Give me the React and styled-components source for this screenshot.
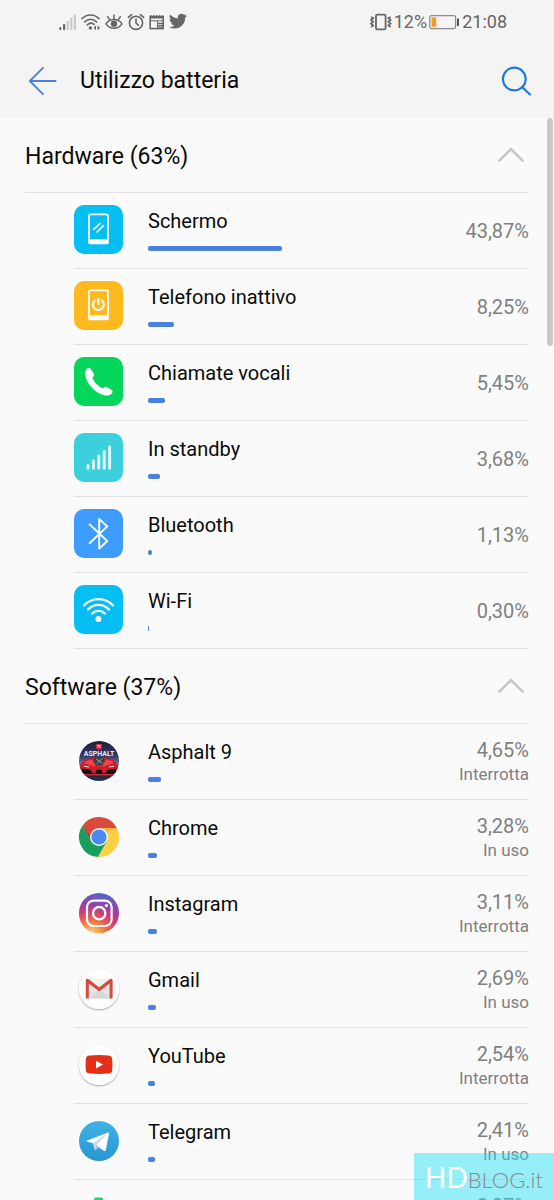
import React, { useState } from "react";
import styled, { createGlobalStyle } from "styled-components";

const GlobalStyle = createGlobalStyle`
  *, *::before, *::after { box-sizing: border-box; }
  body {
    margin: 0;
    background: #fafafa;
    color: #0a0a0a;
    font-family: Roboto, "Noto Sans", sans-serif;
  }
  button { font: inherit; color: inherit; background: none; border: 0; padding: 0; cursor: pointer; }
  ul { list-style: none; margin: 0; padding: 0; }
  svg { display: block; flex: none; }
`;

const Screen = styled.div`
  position: relative;
  display: flex;
  flex-direction: column;
  height: 100vh;
  overflow: hidden;
`;

const TopArea = styled.header`
  flex: none;
  background: #f4f4f4;
`;

const StatusBar = styled.div`
  display: flex;
  align-items: center;
  justify-content: space-between;
  height: 44px;
  padding: 0 47px 0 59px;
  color: #666;
  font-size: 18px;
  line-height: 24px;
`;

const StatusGroup = styled.div`
  display: flex;
  align-items: center;
  gap: ${(p) => p.$gap}px;
`;

const TitleBar = styled.div`
  display: flex;
  align-items: center;
  height: 74px;
  padding: 0 22px 0 28px;
`;

const IconButton = styled.button`
  display: flex;
  flex: none;
`;

const Title = styled.h1`
  flex: 1;
  margin: 0;
  padding-left: 23px;
  font-size: 23px;
  line-height: 32px;
  font-weight: 400;
`;

const Content = styled.main`
  position: relative;
  flex: 1;
  min-height: 0;
  overflow: hidden;
`;

const ScrollThumb = styled.div`
  position: absolute;
  top: 0;
  right: 1px;
  width: 6px;
  height: 228px;
  border-radius: 3px;
  background: #c9c9c9;
`;

const SectionHeading = styled.h2`
  margin: 0 25px;
  font-size: 23px;
  font-weight: 400;
  border-bottom: 1px solid #e2e2e2;
`;

const SectionToggle = styled.button`
  display: flex;
  align-items: center;
  justify-content: space-between;
  width: 100%;
  height: 74px;
  padding-right: 4px;
  text-align: left;
`;

const SectionLabel = styled.span`
  padding-top: 2px;
`;

const Chevron = styled.svg`
  transform: ${(p) => (p.$open ? "none" : "rotate(180deg)")};
`;

const Row = styled.li`
  display: flex;
  height: 76px;
  margin: 0 25px 0 74px;
  border-bottom: 1px solid #e2e2e2;
`;

const IconCell = styled.div`
  display: flex;
  flex: none;
  align-items: center;
  justify-content: center;
  width: 49px;
  padding-bottom: 2px;
`;

const Tile = styled.div`
  width: 49px;
  height: 49px;
  border-radius: 10px;
  background: ${(p) => p.$color};
`;

const Disc = styled.div`
  width: 40px;
  height: 40px;
  border-radius: 50%;
  box-shadow: ${(p) => (p.$raised ? "0 1px 2px rgba(0, 0, 0, 0.35)" : "none")};
`;

const Details = styled.div`
  flex: 1;
  min-width: 0;
  padding: 16px 0 0 25px;
`;

const Name = styled.div`
  font-size: 20px;
  line-height: 24px;
  white-space: nowrap;
`;

const UsageBar = styled.div`
  height: 5px;
  margin-top: 13px;
  border-radius: 2px;
  background: #4a80de;
`;

const Figures = styled.div`
  display: flex;
  flex: none;
  flex-direction: column;
  justify-content: center;
  padding-top: 1px;
  color: #808080;
  text-align: right;
`;

const Percent = styled.div`
  font-size: 20px;
  line-height: 24px;
`;

const State = styled.div`
  font-size: 17px;
  line-height: 24px;
`;

const Watermark = styled.div`
  position: absolute;
  right: 0;
  bottom: 0;
  display: flex;
  align-items: baseline;
  height: 47px;
  width: 140px;
  padding: 6px 0 0 11px;
  background: rgba(28, 223, 246, 0.45);
  font-family: Lato, sans-serif;
  font-weight: 300;
  line-height: 36px;
`;

const BrandLead = styled.span`
  color: #fff;
  font-size: 28px;
  font-weight: 400;
`;

const BrandTail = styled.span`
  color: #8c8590;
  font-size: 22px;
`;

/* Status bar icons */

const Signal = () => (
  <svg width="18" height="18" viewBox="0 0 18 18">
    <g fill="#666">
      <rect x="0.3" y="14" width="2" height="3" rx="0.8" />
      <rect x="4" y="11" width="2.2" height="6" rx="0.8" />
    </g>
    <g fill="#c9c9c9">
      <rect x="7.6" y="8" width="2.2" height="9" rx="0.8" />
      <rect x="11.2" y="4.5" width="2.2" height="12.5" rx="0.8" />
      <rect x="14.8" y="1.5" width="2.2" height="15.5" rx="0.8" />
    </g>
  </svg>
);

const WifiStatus = () => (
  <svg width="20" height="18" viewBox="0 0 20 18" fill="none" stroke="#666" strokeWidth="1.6" strokeLinecap="round">
    <path d="M1 5.6C5.8.8 13.2.8 18 5.6M3.6 9C7 5.3 12.2 5.3 15.6 9M6.2 12C8.4 9.8 11 9.8 13 11.4" />
    <circle cx="9.4" cy="15" r="1.7" fill="#666" stroke="none" />
    <path d="M15 12.4l-2.4 2.4 2.4 2.4zM16.6 12.4l2.4 2.4-2.4 2.4z" fill="#666" stroke="none" />
  </svg>
);

const Eye = () => (
  <svg width="18" height="18" viewBox="0 0 18 18" fill="none" stroke="#666" strokeWidth="1.5" strokeLinecap="round">
    <path d="M1 10.8C4.6 5 13.4 5 17 10.8 13.4 16.6 4.6 16.6 1 10.8z" />
    <circle cx="9" cy="10.7" r="3.2" fill="#666" stroke="none" />
    <path d="M9 5.4V2M4.6 6.4 2.6 3.8M13.4 6.4l2-2.6" />
  </svg>
);

const Alarm = () => (
  <svg width="18" height="18" viewBox="0 0 18 18" fill="none" stroke="#666" strokeWidth="1.6" strokeLinecap="round">
    <circle cx="9" cy="9.8" r="6.6" />
    <path d="M9 6v4l2.4 2.2M1.4 4.4 4.6 1.6M16.6 4.4 13.4 1.6" />
  </svg>
);

const News = () => (
  <svg width="16" height="18" viewBox="0 0 16 18" fill="none" stroke="#666">
    <rect x="1.2" y="3.6" width="13" height="12" strokeWidth="1.6" />
    <path d="M1 4.6h13.4M2 2.2v2M4.8 2.2v2M7.6 2.2v2M10.4 2.2v2M13.4 2.2v2" strokeWidth="1.6" />
    <path d="M2 7.8h12M8.4 8v7" strokeWidth="1" />
    <path d="M9 10.4h5M9 12.4h5M9 14.2h5" strokeWidth="1.2" />
  </svg>
);

const Bird = () => (
  <svg width="18" height="18" viewBox="0 1 24 24" fill="#666">
    <path d="M23.95 4.57a10 10 0 0 1-2.82.77 4.96 4.96 0 0 0 2.16-2.72c-.95.55-2 .95-3.13 1.18a4.92 4.92 0 0 0-8.38 4.48C7.69 8.1 4.07 6.13 1.64 3.16a4.92 4.92 0 0 0 1.52 6.57 4.9 4.9 0 0 1-2.23-.61v.06a4.92 4.92 0 0 0 3.95 4.83 5 5 0 0 1-2.21.08 4.94 4.94 0 0 0 4.6 3.42A9.87 9.87 0 0 1 0 19.54a14 14 0 0 0 7.55 2.21c9.05 0 14-7.5 14-13.98 0-.21 0-.42-.02-.63a9.94 9.94 0 0 0 2.42-2.57z" />
  </svg>
);

const Vibrate = () => (
  <svg width="22" height="18" viewBox="0 0 22 18" fill="none" stroke="#666">
    <rect x="6" y="1.6" width="9.6" height="14.8" rx="1.4" strokeWidth="1.8" />
    <path d="M1 4l2.2 1.2L1 7l2.2 1.8L1 10.6l2.2 1.8L1 14M20.6 4l-2.2 1.2L20.6 7l-2.2 1.8 2.2 1.8-2.2 1.8 2.2 1.6" strokeWidth="1.7" />
  </svg>
);

const Battery = () => (
  <svg width="31" height="16" viewBox="0 0 31 16">
    <rect x="0.8" y="1.6" width="25.8" height="13" rx="1.8" fill="none" stroke="#8d8d8d" strokeWidth="1.3" />
    <rect x="2.6" y="3.4" width="4.6" height="9.4" fill="#f79a1f" />
    <rect x="28" y="4.4" width="2" height="7.6" rx="0.6" fill="#555" />
  </svg>
);

/* Title bar icons */

const BackArrow = () => (
  <svg width="29" height="30" viewBox="0 0 29 30" fill="none" stroke="#4a83d9" strokeWidth="1.9" strokeLinecap="round" strokeLinejoin="round">
    <path d="M15 1.8 1.8 15 15 28.2M2 15h25.6" />
  </svg>
);

const SearchIcon = () => (
  <svg width="31" height="30" viewBox="0 0 31 30" fill="none" stroke="#1f78d6" strokeWidth="2.1" strokeLinecap="round">
    <circle cx="13.3" cy="13" r="11.4" />
    <path d="M21.4 21.2 29 28.6" />
  </svg>
);

/* Hardware tile icons, drawn on a 49 unit grid */

const PhoneFrame = ({ children }) => (
  <svg viewBox="0 0 49 49" fill="none" stroke="#fff" strokeLinecap="round">
    <rect x="15" y="9.4" width="19" height="29" rx="2" strokeWidth="1.8" />
    <path d="M15.4 36.3h18.2" strokeWidth="4" strokeLinecap="butt" />
    {children}
  </svg>
);

const ScreenGlyph = () => (
  <PhoneFrame>
    <path d="M19.6 24.4 26 18.6M23 27 29.4 20.6" strokeWidth="1.7" />
  </PhoneFrame>
);

const IdleGlyph = () => (
  <PhoneFrame>
    <path d="M20.7 19.4a5.5 5.5 0 1 0 7.4 0M24.4 18v5" strokeWidth="2" />
  </PhoneFrame>
);

const CallGlyph = () => (
  <svg viewBox="0 0 49 49" fill="#fff">
    <path d="M12.5 12.2C13.7 10.4 15.6 10.4 16.8 12L19.8 16.4C20.6 17.8 20 18.8 18.4 20.6C20 25.4 24 29.6 28.8 31.4C30.4 29.8 31.6 29.4 33 30.2L37.8 33.1C39 34 38.8 35.2 38 36.2C35.5 39.4 31.5 38.9 27 37.2C19 33.7 13 26.4 11.2 18.2C10.8 16 11.3 14 12.5 12.2Z" />
  </svg>
);

const StandbyGlyph = () => (
  <svg viewBox="0 0 49 49" stroke="#e6fbfb" strokeWidth="2.9" strokeLinecap="round">
    <path d="M14 32.8v2.4M19.4 28v7.2M24.8 23v12.2M30.2 18.4v16.8M35.6 14v21.2" />
  </svg>
);

const BluetoothGlyph = () => (
  <svg viewBox="0 0 49 49" fill="none" stroke="#fff" strokeWidth="1.9" strokeLinecap="round" strokeLinejoin="round">
    <path d="M15.6 15.4 33.2 32 25.2 39.6V10L33.2 17.4 15.6 34.2" />
  </svg>
);

const WifiGlyph = () => (
  <svg viewBox="0 0 49 49" fill="none" stroke="#fff" strokeWidth="2.2" strokeLinecap="round">
    <path d="M10 20.4C18 12 31 12 39 20.4M14 24.6C20 18.4 29 18.4 35 24.6M18.2 28.6C21.8 24.8 27.2 24.8 30.8 28.6" />
    <circle cx="24.4" cy="33.9" r="3" fill="#fff" stroke="none" />
  </svg>
);

/* Application icons, drawn on a 40 unit grid */

const RacingIcon = () => (
  <svg viewBox="0 0 40 40">
    <defs>
      <clipPath id="race-clip"><circle cx="20" cy="20" r="20" /></clipPath>
      <linearGradient id="race-sky" x1="0" y1="0" x2="0" y2="1">
        <stop offset="0" stopColor="#1b1d33" />
        <stop offset="0.4" stopColor="#3c3e6c" />
        <stop offset="0.55" stopColor="#6b6fa8" />
        <stop offset="0.8" stopColor="#221a2c" />
        <stop offset="1" stopColor="#2b3558" />
      </linearGradient>
    </defs>
    <g clipPath="url(#race-clip)">
      <rect width="40" height="40" fill="url(#race-sky)" />
      <path d="M17 3h6v4.4L20 9.6l-3-2.2z" fill="#c8203f" />
      <path d="M18.4 4.4h3.2M18.4 6h3.2" stroke="#fff" strokeWidth="0.8" />
      <text x="20" y="15.4" fill="#e8ebf5" fontFamily="Roboto, sans-serif" fontSize="7" fontWeight="700" textAnchor="middle">ASPHALT</text>
      <path d="M1 24 6 18.4l7-1.4h14l7 1.4 5 5.6 1 8H0z" fill="#c9202c" />
      <path d="M14 18.6 17 16.6h6l3 2-3 5.4h-6z" fill="#39404a" />
      <path d="M17 18l6 4M23 17.6l-5 5" stroke="#9aa8a5" strokeWidth="1" />
      <path d="M6 20.4 13 18.6l4 7.4-11-3.6z" fill="#f0434c" />
      <path d="M34 20.4 27 18.6l-4 7.4 11-3.6z" fill="#f0434c" />
      <path d="M3 27.4l8 1.4 3 3.6H3zM37 27.4l-8 1.4-3 3.6h11zM17.6 28.6h4.8l1.2 4h-7.2z" fill="#1c1015" />
      <path d="M5 25.2l5 .8M35 25.2l-5 .8" stroke="#ffd9d6" strokeWidth="1" />
      <path d="M3 33h34l-4 1.6H7z" fill="#c52d38" />
    </g>
  </svg>
);

const ChromeIcon = () => (
  <svg viewBox="0 0 40 40">
    <path d="M3.27 9.03A20 20 0 0 1 37.86 11H20L12.21 24.5z" fill="#d94a3c" />
    <path d="M37.86 11A20 20 0 0 1 18.86 39.97L27.79 24.5 20 11z" fill="#fdcf47" />
    <path d="M18.86 39.97A20 20 0 0 1 3.27 9.03L12.21 24.5h15.58z" fill="#17a05d" />
    <path d="M20 11h17.86l.6 1.6L27 15z" fill="#e0a830" opacity="0.5" />
    <path d="M3.27 9.03 12.21 24.5 11 18z" fill="#7d3b26" opacity="0.5" />
    <circle cx="20" cy="20" r="9" fill="#f5f5f5" />
    <circle cx="20" cy="20" r="7.6" fill="#4a89f3" />
  </svg>
);

const InstagramIcon = () => (
  <svg viewBox="0 0 40 40">
    <defs>
      <linearGradient id="insta-base" x1="0.6" y1="0" x2="0.4" y2="1">
        <stop offset="0" stopColor="#4f68c2" />
        <stop offset="0.35" stopColor="#9740ae" />
        <stop offset="0.65" stopColor="#d63278" />
        <stop offset="1" stopColor="#ee5348" />
      </linearGradient>
      <radialGradient id="insta-glow" cx="0.32" cy="1.02" r="0.75">
        <stop offset="0" stopColor="#ffd776" />
        <stop offset="0.35" stopColor="#f9943f" stopOpacity="0.9" />
        <stop offset="1" stopColor="#e2384f" stopOpacity="0" />
      </radialGradient>
    </defs>
    <circle cx="20" cy="20" r="20" fill="url(#insta-base)" />
    <circle cx="20" cy="20" r="20" fill="url(#insta-glow)" />
    <rect x="8" y="7.6" width="24.6" height="25.4" rx="6.6" fill="none" stroke="#fff" strokeWidth="2.2" />
    <circle cx="20.2" cy="20.2" r="6.2" fill="none" stroke="#fff" strokeWidth="2.3" />
    <circle cx="27.4" cy="12.6" r="1.6" fill="#fff" />
  </svg>
);

const GmailIcon = () => (
  <svg viewBox="0 0 40 40">
    <circle cx="20" cy="20" r="20" fill="#fefefe" />
    <rect x="7" y="10" width="26.4" height="19.6" rx="1.4" fill="#e4e4e4" />
    <path d="M10 29.6 20 20.6l13 9z" fill="#d8d8d8" />
    <path d="M9.4 10h21.6L20.2 18.6z" fill="#f1f1f1" />
    <path d="M6.8 11.4C6.8 9.8 8.8 9.4 10 10.4L20.2 18.4 30.4 10.4C31.6 9.4 33.6 9.8 33.6 11.4V28.4q0 1.2-1.2 1.2H30.6V14.4L20.2 22.4 9.8 14.4V29.6H8q-1.2 0-1.2-1.2z" fill="#d5493f" />
  </svg>
);

const YouTubeIcon = () => (
  <svg viewBox="0 0 40 40">
    <circle cx="20" cy="20" r="20" fill="#fefefe" />
    <path d="M11 10.4Q20 9.8 29 10.4C32 10.6 33 11.8 33.2 14.4Q33.6 19.6 33.2 24.8C33 27.4 32 28.4 29 28.6Q20 29.2 11 28.6C8 28.4 7 27.4 6.8 24.8Q6.4 19.6 6.8 14.4C7 11.8 8 10.6 11 10.4Z" fill="#e62f18" />
    <path d="M17 15.8 24 19.6l-7 3.8z" fill="#fff" />
  </svg>
);

const TelegramIcon = () => (
  <svg viewBox="0 0 40 40">
    <defs>
      <linearGradient id="tg-blue" x1="0" y1="0" x2="0" y2="1">
        <stop offset="0" stopColor="#41b1e6" />
        <stop offset="1" stopColor="#2897d0" />
      </linearGradient>
    </defs>
    <circle cx="20" cy="20" r="20" fill="url(#tg-blue)" />
    <path d="M8 19.4 29 11.4Q30.4 11.2 30 12.8L26.8 29.2Q26.2 30.6 24.8 29.8L14 22.2 8 20.6Q7 20 8 19.4z" fill="#fbfdfe" />
    <path d="M14 22.2 28.4 12.6 17.4 24 16.4 29.6Q15.6 29.4 15.4 28.6z" fill="#c8daea" />
    <path d="M16.4 29.6 17.4 24 20 26.2z" fill="#a9c6d8" />
  </svg>
);

const PuzzleIcon = () => (
  <svg viewBox="0 0 40 40">
    <path d="M15 4V2.4Q15 0.4 17 0.4h5.4Q24 0.4 24 2.4V8H34v10H20V8H15z" fill="#22d07c" />
    <path d="M6 8h14v12H6z" fill="#2bbf8a" />
    <path d="M6 20h14v16H6z" fill="#4a89f3" />
    <path d="M20 18h14v18H20z" fill="#fdcf47" />
  </svg>
);

const hardware = [
  { name: "Schermo", percent: "43,87%", bar: 134, color: "#06bff2", Glyph: ScreenGlyph },
  { name: "Telefono inattivo", percent: "8,25%", bar: 26, color: "#feb91f", Glyph: IdleGlyph },
  { name: "Chiamate vocali", percent: "5,45%", bar: 17, color: "#04d65c", Glyph: CallGlyph },
  { name: "In standby", percent: "3,68%", bar: 12, color: "#3bd0dc", Glyph: StandbyGlyph },
  { name: "Bluetooth", percent: "1,13%", bar: 4, color: "#3d9cfd", Glyph: BluetoothGlyph },
  { name: "Wi-Fi", percent: "0,30%", bar: 1, color: "#06bff2", Glyph: WifiGlyph },
];

const software = [
  { name: "Asphalt 9", percent: "4,65%", state: "Interrotta", bar: 13, Glyph: RacingIcon },
  { name: "Chrome", percent: "3,28%", state: "In uso", bar: 9, Glyph: ChromeIcon },
  { name: "Instagram", percent: "3,11%", state: "Interrotta", bar: 9, Glyph: InstagramIcon },
  { name: "Gmail", percent: "2,69%", state: "In uso", bar: 8, Glyph: GmailIcon, raised: true },
  { name: "YouTube", percent: "2,54%", state: "Interrotta", bar: 7, Glyph: YouTubeIcon, raised: true },
  { name: "Telegram", percent: "2,41%", state: "In uso", bar: 7, Glyph: TelegramIcon },
  { name: "Google Play Services", percent: "2,07%", state: "In uso", bar: 6, Glyph: PuzzleIcon },
];

function UsageRow({ item }) {
  const { name, percent, state, bar, color, raised, Glyph } = item;
  return (
    <Row>
      <IconCell>
        {color ? (
          <Tile $color={color}><Glyph /></Tile>
        ) : (
          <Disc $raised={raised}><Glyph /></Disc>
        )}
      </IconCell>
      <Details>
        <Name>{name}</Name>
        <UsageBar style={{ width: bar }} />
      </Details>
      <Figures>
        <Percent>{percent}</Percent>
        {state && <State>{state}</State>}
      </Figures>
    </Row>
  );
}

function Section({ title, items }) {
  const [open, setOpen] = useState(true);
  return (
    <section>
      <SectionHeading>
        <SectionToggle type="button" aria-expanded={open} onClick={() => setOpen(!open)}>
          <SectionLabel>{title}</SectionLabel>
          <Chevron $open={open} width="28" height="18" viewBox="0 0 28 18" fill="none" stroke="#c6c6c6" strokeWidth="2.6" strokeLinecap="round">
            <path d="M2.4 14.6 14 3 25.6 14.6" />
          </Chevron>
        </SectionToggle>
      </SectionHeading>
      {open && (
        <ul>
          {items.map((item) => <UsageRow key={item.name} item={item} />)}
        </ul>
      )}
    </section>
  );
}

export default function App() {
  return (
    <>
      <GlobalStyle />
      <Screen>
        <TopArea>
          <StatusBar>
            <StatusGroup $gap={4}>
              <Signal />
              <WifiStatus />
              <Eye />
              <Alarm />
              <News />
              <Bird />
            </StatusGroup>
            <StatusGroup $gap={2}>
              <Vibrate />
              <span>12%</span>
              <Battery />
              <span>21:08</span>
            </StatusGroup>
          </StatusBar>
          <TitleBar>
            <IconButton type="button" aria-label="Indietro"><BackArrow /></IconButton>
            <Title>Utilizzo batteria</Title>
            <IconButton type="button" aria-label="Cerca"><SearchIcon /></IconButton>
          </TitleBar>
        </TopArea>
        <Content>
          <Section title="Hardware (63%)" items={hardware} />
          <Section title="Software (37%)" items={software} />
          <ScrollThumb />
        </Content>
        <Watermark>
          <BrandLead>HD</BrandLead>
          <BrandTail>BLOG.it</BrandTail>
        </Watermark>
      </Screen>
    </>
  );
}
